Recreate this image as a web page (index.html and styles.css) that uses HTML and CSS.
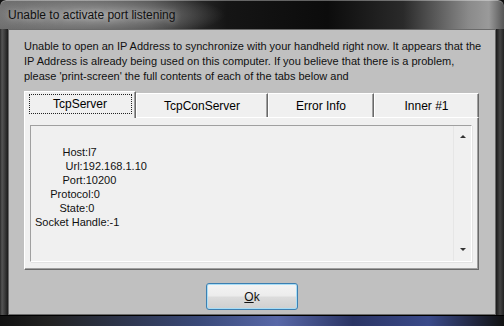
FILE: index.html
```html
<!DOCTYPE html>
<html lang="en">
<head>
    <meta charset="UTF-8">
    <title>Unable to activate port listening</title>
    <link rel="stylesheet" href="styles.css">
</head>
<body>
    <div class="window">
        <div class="titlebar">
            <span class="title">Unable to activate port listening</span>
        </div>
        <div class="client">
            <p class="message">Unable to open an IP Address to synchronize with your handheld right now. It appears that the IP Address is already being used on this computer. If you believe that there is a problem, please 'print-screen' the full contents of each of the tabs below and</p>

            <div class="tabs">
                <div class="tab tab-server active"><span class="focus">TcpServer</span></div>
                <div class="tab tab-con">TcpConServer</div>
                <div class="tab tab-error">Error Info</div>
                <div class="tab tab-inner">Inner #1</div>
            </div>
            <div class="panel">
                <div class="listbox">
                    <pre class="dump">         Host:l7
          Url:192.168.1.10
         Port:10200
     Protocol:0
        State:0
Socket Handle:-1</pre>
                    <div class="scrollbar">
                        <span class="arrow up"></span>
                        <span class="arrow down"></span>
                    </div>
                </div>
            </div>

            <div class="buttons">
                <button class="ok"><u>O</u>k</button>
            </div>
        </div>
        <div class="bottom-frame"></div>
    </div>
</body>
</html>
```

FILE: styles.css
```css
body {
    margin: 0;
    background: #111;
    font-family: 'Liberation Sans', Arial, sans-serif;
    font-size: 12px;
    color: #000;
    overflow: hidden;
}
.window {
    width: 504px;
    height: 326px;
    display: flex;
    flex-direction: column;
    border-radius: 6px 6px 0 0;
    background:
        linear-gradient(to right, #2a2a2a 0, #555 2px, #3a3a3a 5px, #1a1a1a 8px, transparent 8px, transparent 496px, #1a1a1a 496px, #444 500px, #222 504px);
    overflow: hidden;
}
.titlebar {
    height: 29px;
    display: flex;
    align-items: center;
    padding-left: 8px;
    border-radius: 6px 6px 0 0;
    background:
        radial-gradient(ellipse 130px 24px at 95px 15px, rgba(160, 160, 160, 0.9), rgba(110, 110, 110, 0) 100%),
        linear-gradient(to right, #6a6a6a 0, #444 30%, #151515 45%, #0c0c0c 65%, #2a2a2a 80%, #8a8a8a 93%, #9a9a9a 97%, #555 100%);
    box-shadow: inset 0 1px 0 rgba(255, 255, 255, 0.35);
}
.title {
    color: #111;
    font-size: 12px;
    text-shadow: 0 0 6px rgba(255, 255, 255, 0.6);
}
.client {
    height: 286px;
    margin: 0 8px;
    box-sizing: border-box;
    border: 1px solid #6a6a6a;
    background: #c0c0c0;
    display: flex;
    flex-direction: column;
}
.message {
    margin: 0;
    padding: 9px 10px 0 15px;
    line-height: 15px;
    height: 45px;
    font-size: 11px;
    color: #111;
}
.tabs {
    display: flex;
    align-items: flex-end;
    margin: 7px 0 0 15px;
    height: 26px;
}
.tab {
    height: 24px;
    box-sizing: border-box;
    background: #f0f0f0;
    border-top: 1px solid #fff;
    border-left: 1px solid #fff;
    border-right: 1px solid #696969;
    box-shadow: inset -1px 0 0 #a0a0a0;
    display: flex;
    align-items: center;
    justify-content: center;
    font-size: 12px;
}
.tab.active {
    height: 27px;
    margin-bottom: -1px;
    position: relative;
    z-index: 1;
    padding-bottom: 2px;
}
.tab-server { width: 112px; }
.tab-con { width: 132px; }
.tab-error { width: 106px; }
.tab-inner { width: 105px; }
.focus {
    width: 103px;
    height: 20px;
    box-sizing: border-box;
    border: 1px dotted #222;
    display: flex;
    align-items: center;
    justify-content: center;
}
.panel {
    width: 455px;
    height: 153px;
    margin-left: 15px;
    box-sizing: border-box;
    background: #f0f0f0;
    border-top: 1px solid #fff;
    border-left: 1px solid #fff;
    border-right: 1px solid #696969;
    border-bottom: 1px solid #696969;
    box-shadow: inset -1px -1px 0 #a0a0a0;
    padding: 7px 0 0 5px;
}
.listbox {
    width: 442px;
    height: 137px;
    box-sizing: border-box;
    border-top: 1px solid #a0a0a0;
    border-left: 1px solid #a0a0a0;
    border-right: 1px solid #fff;
    border-bottom: 1px solid #fff;
    box-shadow: 1px 1px 0 #e3e3e3;
    display: flex;
}
.dump {
    flex: 1;
    margin: 0;
    padding: 19px 0 0 4px;
    font-family: 'Liberation Sans', Arial, sans-serif;
    font-size: 11px;
    line-height: 14px;
    color: #111;
}
.scrollbar {
    width: 17px;
    border-left: 1px solid #e6e6e6;
    background: #f0f0f0;
    display: flex;
    flex-direction: column;
    justify-content: space-between;
    align-items: center;
    padding: 9px 0 10px;
}
.arrow {
    width: 0;
    height: 0;
    border-left: 3px solid transparent;
    border-right: 3px solid transparent;
}
.arrow.up {
    border-bottom: 3px solid #333;
}
.arrow.down {
    border-top: 3px solid #333;
}
.buttons {
    display: flex;
    justify-content: center;
    margin-top: 13px;
}
.ok {
    width: 92px;
    height: 27px;
    border: 1px solid #3c7fb1;
    border-radius: 3px;
    background: linear-gradient(#f4f4f4 0, #ececec 48%, #dcdcdc 52%, #cfcfcf 100%);
    box-shadow: inset 0 0 0 1px #a8ddf6;
    font-family: 'Liberation Sans', Arial, sans-serif;
    font-size: 12px;
    color: #111;
    padding: 0;
}
.bottom-frame {
    flex: 1;
    background:
        linear-gradient(to right, #111 0, #222 10%, #3a4a7a 40%, #5868a8 55%, #2a3464 70%, #3a4a8a 85%, #111 100%);
    border-top: 1px solid #000;
}
```
